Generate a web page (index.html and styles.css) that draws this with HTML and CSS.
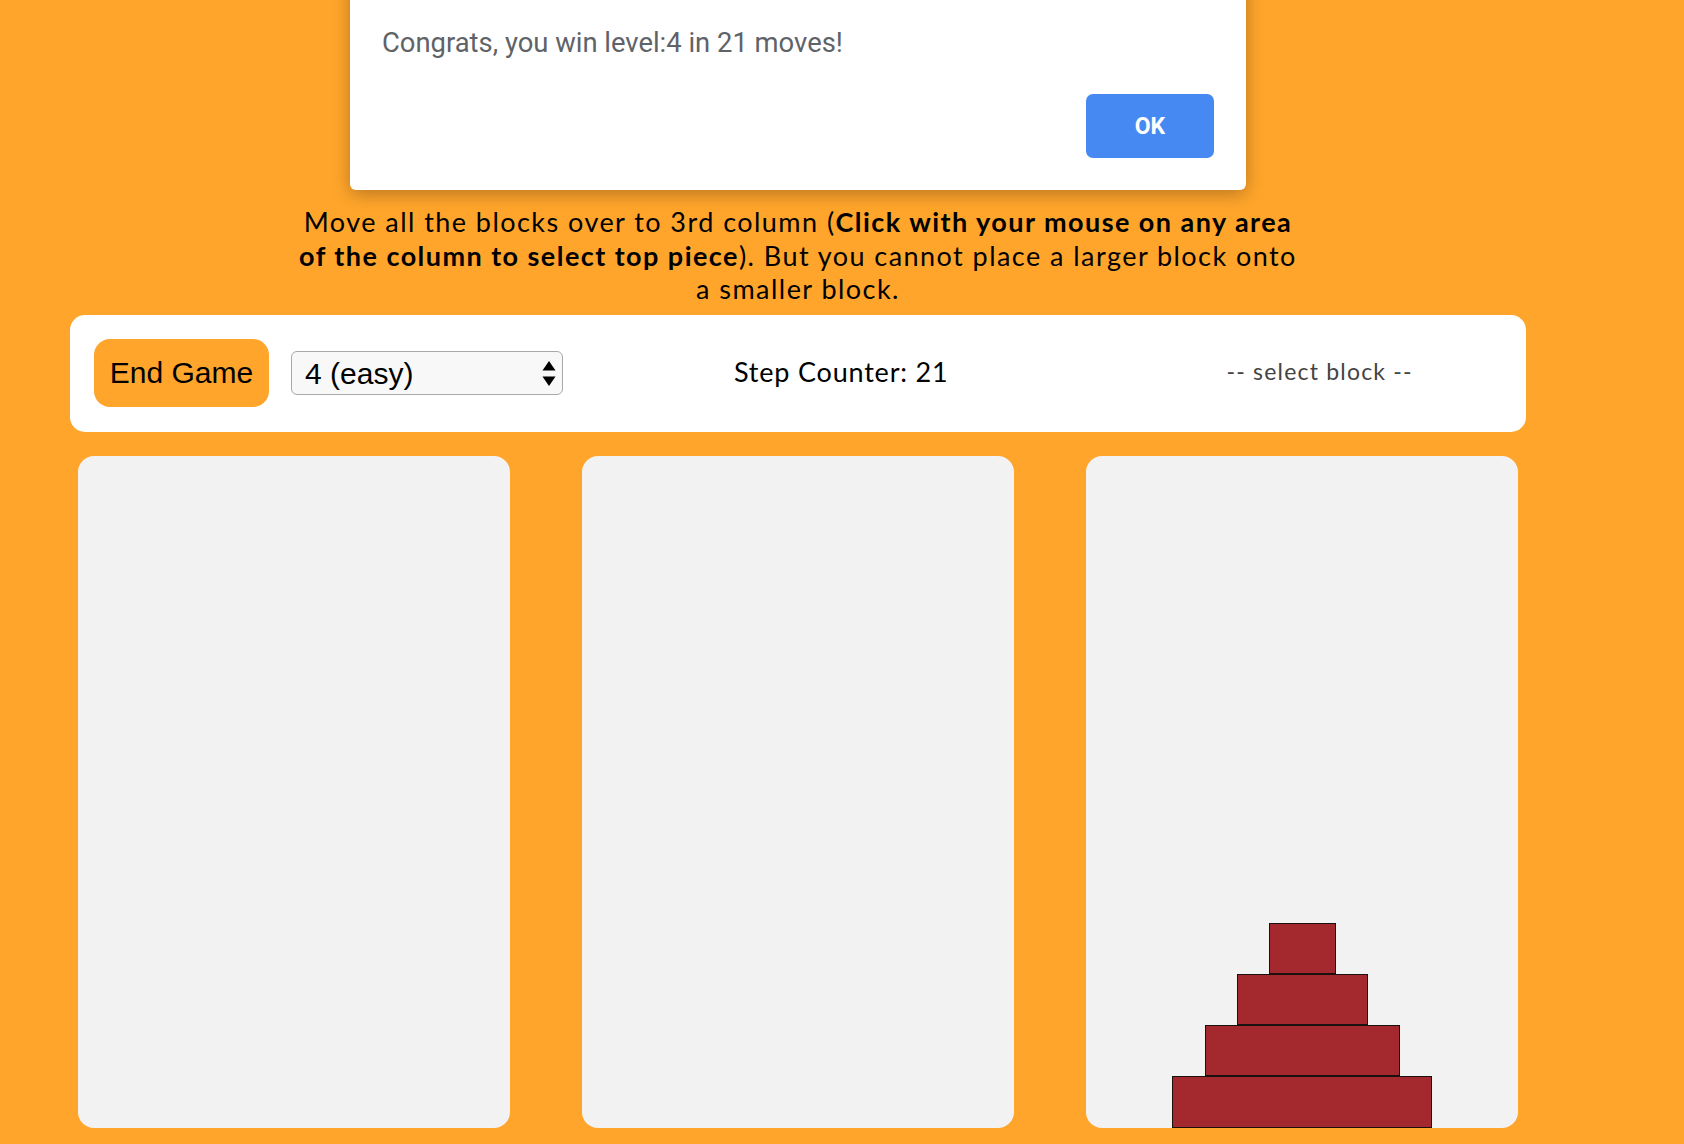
FILE: index.html
```html
<!DOCTYPE html>
<html>
<head>
<meta charset="utf-8">
<title>Tower of Hanoi</title>
<link rel="stylesheet" href="styles.css">
</head>
<body>
<div class="page">
  <p class="instructions">Move all the blocks over to 3rd column (<b>Click with your mouse on any area<br>of the column to select top piece</b>). But you cannot place a larger block onto<br>a smaller block.</p>
  <div class="controls">
    <button class="end-btn">End Game</button>
    <div class="select-wrap">
      <select class="level"><option>4 (easy)</option></select>
      <svg class="arrows" width="14" height="26" viewBox="0 0 14 26"><polygon points="7,0 13.5,9.5 0.5,9.5" fill="#000"/><polygon points="0.5,15.5 13.5,15.5 7,25" fill="#000"/></svg>
    </div>
    <div class="steps">Step Counter: 21</div>
    <div class="selected">-- select block --</div>
  </div>
  <div class="board">
    <div class="col"></div>
    <div class="col"></div>
    <div class="col">
      <div class="block" style="width:67px"></div>
      <div class="block" style="width:131px"></div>
      <div class="block" style="width:195px"></div>
      <div class="block" style="width:260px"></div>
    </div>
  </div>
</div>
<div class="dialog">
  <div class="msg">Congrats, you win level:4 in 21 moves!</div>
  <div class="actions"><button class="ok">OK</button></div>
</div>
</body>
</html>
```
FILE: styles.css
```css
html, body {
  margin: 0;
  padding: 0;
}
body {
  background: #ffa52b;
  height: 1144px;
  overflow: hidden;
  position: relative;
  font-family: Lato, "Open Sans", sans-serif;
  color: #000;
}
.page {
  width: 1456px;
  margin-left: 70px;
  padding-top: 205px;
}
.instructions {
  margin: 0;
  text-align: center;
  font-size: 27px;
  line-height: 33.5px;
  letter-spacing: 1.45px;
}
.instructions b {
  font-weight: 700;
}
.controls {
  margin-top: 9px;
  background: #fff;
  border-radius: 15px;
  height: 117px;
  box-sizing: border-box;
  padding: 0 24px;
  display: flex;
  align-items: center;
}
.end-btn {
  background: #ffa52b;
  border: none;
  border-radius: 16px;
  height: 68px;
  width: 175px;
  padding: 0;
  font-family: "Liberation Sans", Arial, sans-serif;
  font-size: 30px;
  color: #000;
}
.select-wrap {
  position: relative;
  margin-left: 22px;
  width: 272px;
  height: 44px;
}
.level {
  -webkit-appearance: none;
  appearance: none;
  width: 100%;
  height: 100%;
  box-sizing: border-box;
  background: #f8f8f8;
  border: 1.5px solid #a9a9a9;
  border-radius: 6px;
  font-family: "Liberation Sans", Arial, sans-serif;
  font-size: 30px;
  color: #000;
  padding: 0 0 0 13px;
  margin: 0;
}
.arrows {
  position: absolute;
  right: 7px;
  top: 9.5px;
  pointer-events: none;
}
.steps {
  margin-left: 171px;
  font-size: 27px;
  letter-spacing: 0.8px;
  padding-bottom: 4px;
}
.selected {
  margin-left: 278px;
  font-size: 23px;
  letter-spacing: 1.2px;
  color: #444;
  padding-bottom: 4px;
}
.board {
  margin-top: 24px;
  padding: 0 8px;
  display: grid;
  grid-template-columns: 432px 432px 432px;
  column-gap: 72px;
}
.col {
  height: 672px;
  background: #f2f2f2;
  border-radius: 16px;
  display: flex;
  flex-direction: column;
  justify-content: flex-end;
  align-items: center;
}
.block {
  box-sizing: border-box;
  height: 51.25px;
  background: #a3292e;
  border: 1.3px solid #1a1010;
}
.dialog {
  position: absolute;
  left: 350px;
  top: -40px;
  width: 896px;
  height: 230px;
  box-sizing: border-box;
  background: #fff;
  border-radius: 6px;
  box-shadow: 0 4px 18px rgba(0,0,0,0.28);
  padding: 40px 32px 32px 32px;
  display: flex;
  flex-direction: column;
  font-family: Roboto, "Liberation Sans", sans-serif;
}
.msg {
  margin-top: 28px;
  font-size: 27.4px;
  line-height: 30px;
  color: #5f6368;
}
.actions {
  margin-top: auto;
  display: flex;
  justify-content: flex-end;
}
.ok {
  width: 128px;
  height: 64px;
  border: none;
  border-radius: 7px;
  background: #4689f2;
  color: #fff;
  font-family: Roboto, "Liberation Sans", sans-serif;
  font-weight: 700;
  font-size: 23px;
  padding: 0;
}
```
